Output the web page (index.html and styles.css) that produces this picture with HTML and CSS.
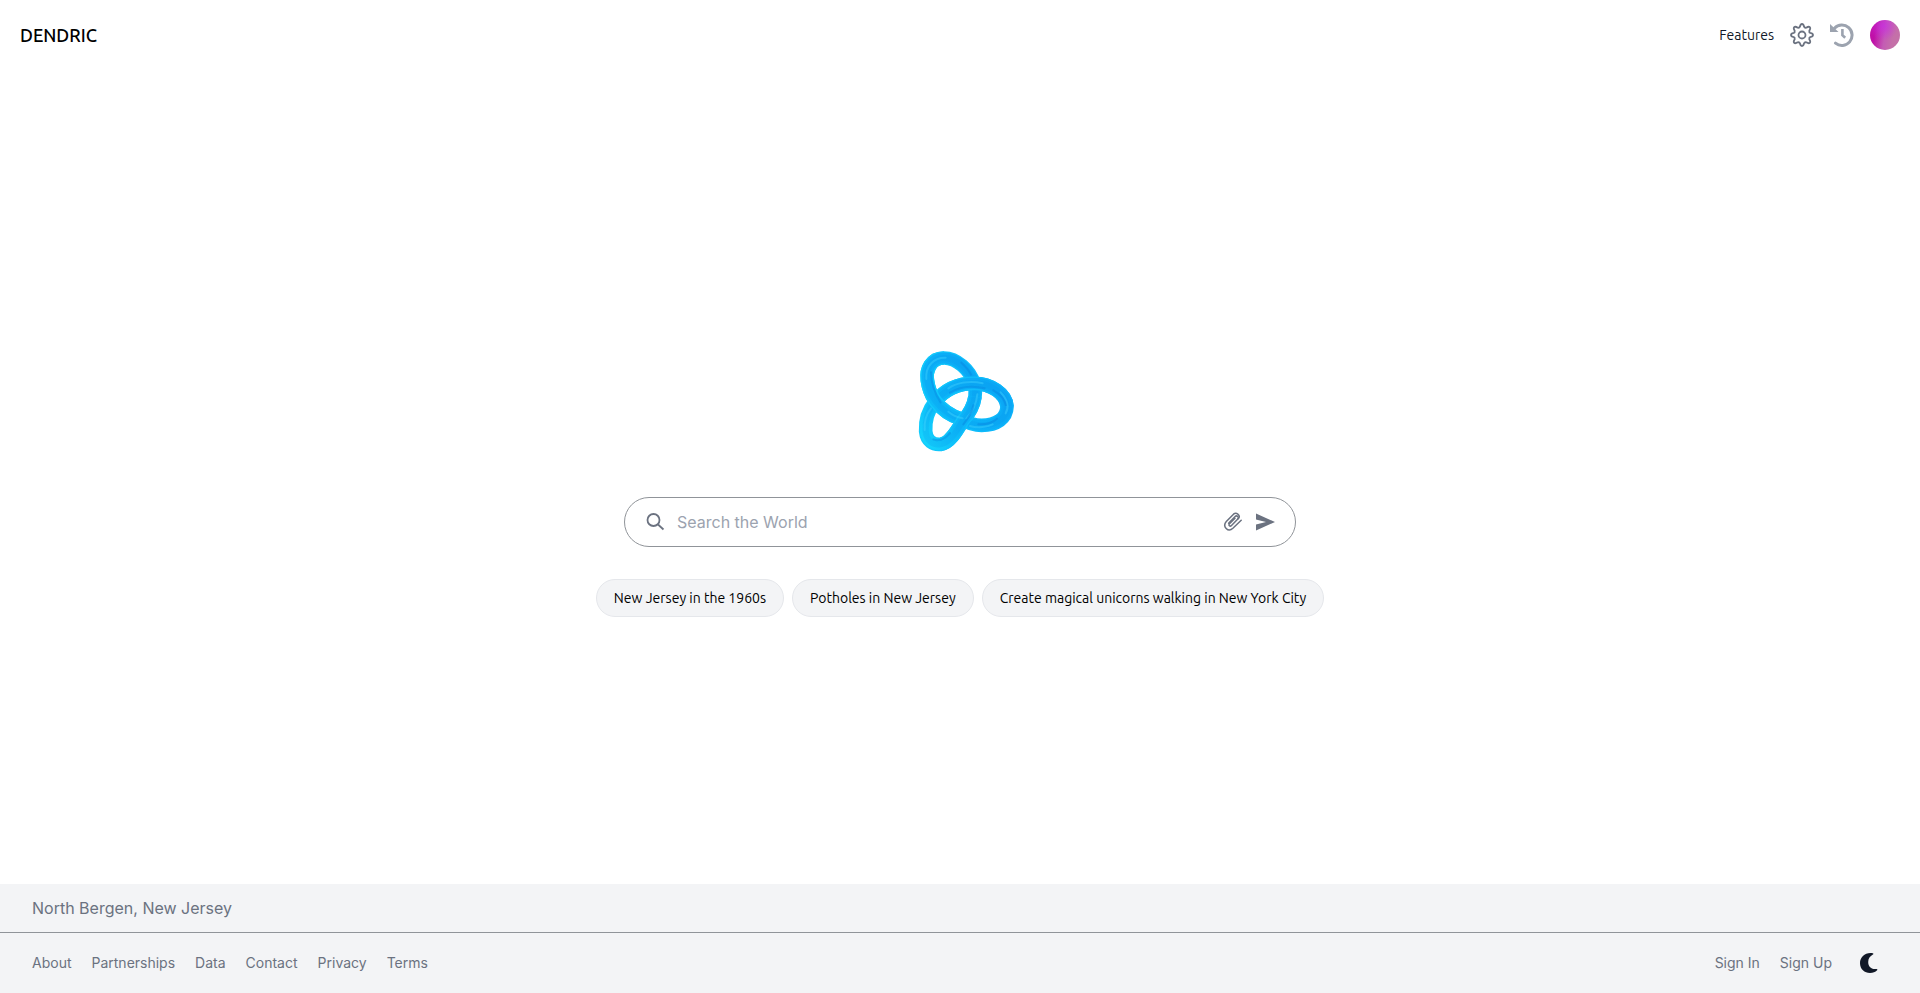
FILE: index.html
```
<!DOCTYPE html>
<html lang="en">
<head>
    <meta charset="UTF-8">
    <meta name="viewport" content="width=device-width, initial-scale=1.0">
    <title>Dendric</title>
    <link rel="stylesheet" href="styles.css">
</head>
<body>
    <header class="topbar">
        <a class="brand" href="#">DENDRIC</a>
        <nav class="topnav">
            <a class="features" href="#">Features</a>
            <button class="icon-button" type="button" aria-label="Settings">
                <svg width="24" height="24" viewBox="0 0 24 24" fill="none" stroke="#6b7280" stroke-width="1.8" stroke-linejoin="round">
                    <path d="M9.900 3.800Q10.400 1 12 1T14.100 3.800Q14.500 5 16.300 4.700Q18.700 3.100 19.800 4.200T19.300 7.700Q19 9.500 20.200 9.900Q23 10.400 23 12T20.200 14.100Q19 14.500 19.300 16.300Q20.900 18.700 19.800 19.800T16.300 19.300Q14.500 19 14.100 20.200Q13.600 23 12 23T9.900 20.200Q9.500 19 7.700 19.300Q5.300 20.900 4.200 19.800T4.700 16.300Q5 14.500 3.800 14.100Q1 13.600 1 12T3.800 9.900Q5 9.500 4.700 7.700Q3.100 5.300 4.200 4.200T7.700 4.700Q9.500 5 9.900 3.800z"/>
                    <circle cx="12" cy="12" r="3.500"/>
                </svg>
            </button>
            <button class="icon-button" type="button" aria-label="History">
                <svg width="24" height="24" viewBox="0 0 24 24" fill="none" stroke="#9ca3af" stroke-width="3">
                    <path d="M4.500 5.200A10.200 10.200 0 1 1 5.500 20.200" stroke-linecap="round"/>
                    <path d="M0 1v8h8.500z" fill="#9ca3af" stroke="none"/>
                    <path d="M12.400 6v6.200l2.800 2.600" stroke-width="2.600"/>
                </svg>
            </button>
            <button class="avatar" type="button" aria-label="Account"></button>
        </nav>
    </header>

    <main class="content">
        <svg class="logo" width="130" height="130" viewBox="0 0 390 390" fill="none">
            <defs>
                <linearGradient id="tube" gradientUnits="userSpaceOnUse" x1="60" y1="330" x2="300" y2="150">
                    <stop offset="0" stop-color="#16d8fd"/>
                    <stop offset=".4" stop-color="#0cb6f8"/>
                    <stop offset="1" stop-color="#0ba6f5"/>
                </linearGradient>
                <linearGradient id="rim" gradientUnits="userSpaceOnUse" x1="60" y1="200" x2="340" y2="200">
                    <stop offset="0" stop-color="#12ccfc"/>
                    <stop offset="1" stop-color="#0cb2fa"/>
                </linearGradient>
                <path id="loop" d="M225 185C227 171 226 158 222 145C210 105 170 69 132 69C92 69 78 105 82 135C85 160 92 178 105 197C125 224 150 242 185 253C205 265 222 271 245 271C290 271 320 250 321 215C319 176 272 145 222 145C175 145 133 165 105 200C85 225 75 255 77 289C80 319 100 330 122 328C150 325 172 285 190 255C208 237 222 208 225 185Z"/>
                <path id="right" d="M321 215C319 176 272 145 222 145C175 145 133 165 105 200"/>
                <path id="left" d="M132 69C92 69 78 105 82 135C85 160 92 178 105 197C125 224 150 242 185 253"/>
                <path id="bottom" d="M122 328C150 325 172 285 190 255C208 237 222 208 225 185"/>
            </defs>
            <g>
                <use class="rim" href="#loop"/>
                <use class="tube" href="#loop"/>
                <use class="core" href="#loop"/>
            </g>
            <g>
                <use class="rim" href="#right"/>
                <use class="tube" href="#right"/>
                <use class="core" href="#right"/>
            </g>
            <g>
                <use class="rim" href="#left"/>
                <use class="tube" href="#left"/>
                <use class="core" href="#left"/>
            </g>
            <g>
                <use class="rim" href="#bottom"/>
                <use class="tube" href="#bottom"/>
                <use class="core" href="#bottom"/>
            </g>
            <!-- reflections along the tube -->
            <g class="shine">
                <path d="M79 132C76 92 102 67 137 68"/>
                <path d="M145 230C160 243 174 247 188 250"/>
                <path d="M145 160C170 143 210 136 248 145"/>
                <path d="M302 172C322 193 328 215 317 235"/>
                <path d="M210 273C234 280 262 276 278 268"/>
                <path d="M74 285C72 257 80 236 93 220"/>
                <path d="M199 250C220 228 230 200 232 178"/>
            </g>
            <g class="shade">
                <path d="M93 112C93 146 104 176 122 202"/>
                <path d="M184 83C196 94 206 104 213 119"/>
                <path d="M150 173C182 153 220 152 254 160"/>
                <path d="M280 166C302 178 314 192 318 211"/>
                <path d="M235 268C258 269 278 263 291 251"/>
                <path d="M190 268C205 250 216 232 220 211"/>
                <path d="M100 313C120 321 137 310 150 294"/>
            </g>
        </svg>

        <form class="search">
            <svg width="20" height="20" viewBox="0 0 20 20" fill="none" stroke="#6b7280" stroke-width="1.800">
                <circle cx="8.500" cy="8" r="6"/>
                <path d="M13 12.500 18.500 17.500"/>
            </svg>
            <input type="text" placeholder="Search the World" aria-label="Search the World">
            <button class="icon-button" type="button" aria-label="Attach">
                <svg width="20" height="20" viewBox="0 0 20 20" fill="none" stroke="#6b7280" stroke-width="1.500" stroke-linecap="round">
                    <path d="M5.600 11.200 11.900 4.700C13.900 2.700 16.500 5.200 14.600 7.200L8.500 13.500C7 15 5.100 13.200 6.500 11.800L12 6.200" />
                    <path d="M14.600 7.200 16 5.700C17.200 3.200 13.500-.3 10.500 2.200L3.300 9.600C-.9 14.400 5 20.700 9.900 16.300L18.200 8.200"/>
                </svg>
            </button>
            <button class="icon-button" type="submit" aria-label="Send">
                <svg width="20" height="20" viewBox="0 0 20 20" fill="#6b7280">
                    <path d="M1 1.500v6L11 10 1 12.500v6L20 10z"/>
                </svg>
            </button>
        </form>

        <div class="suggestions">
            <button type="button">New Jersey in the 1960s</button>
            <button type="button">Potholes in New Jersey</button>
            <button type="button">Create magical unicorns walking in New York City</button>
        </div>
    </main>

    <footer class="footer">
        <div class="location">North Bergen, New Jersey</div>
        <div class="footer-bar">
            <nav class="footer-links">
                <a href="#">About</a>
                <a href="#">Partnerships</a>
                <a href="#">Data</a>
                <a href="#">Contact</a>
                <a href="#">Privacy</a>
                <a href="#">Terms</a>
            </nav>
            <nav class="footer-links">
                <a href="#">Sign In</a>
                <a href="#">Sign Up</a>
                <button class="icon-button theme" type="button" aria-label="Dark mode">
                    <svg width="20" height="20" viewBox="0 0 20 20" fill="#111827">
                        <path d="M12.800.3C5.500-1 0 4 0 10.200 0 16 4.500 20 10 20c3 0 5.300-.9 7.100-2.700.6-.7.200-1.400-.6-1.300C11 16.800 8.200 13.200 8.200 9c0-3.500 1.800-5.700 4.700-7.400.7-.4.700-1.100-.1-1.300z"/>
                    </svg>
                </button>
            </nav>
        </div>
    </footer>
</body>
</html>
```
FILE: styles.css
```
* {
    box-sizing: border-box;
}

body {
    margin: 0;
    min-height: 100vh;
    display: flex;
    flex-direction: column;
    background-color: #fff;
    font-family: Inter, sans-serif;
    color: #6b7280;
}

a {
    color: inherit;
    text-decoration: none;
}

button {
    font-family: inherit;
    border: none;
    padding: 0;
    background: none;
    cursor: pointer;
}

.icon-button {
    display: flex;
}

.topbar {
    display: flex;
    justify-content: space-between;
    align-items: center;
    height: 70px;
    padding: 0 20px;
}

.brand,
.features,
.suggestions button {
    font-family: Ubuntu, "Noto Sans", sans-serif;
}

.brand {
    font-size: 18px;
    font-weight: 500;
    color: #000;
}

.topnav {
    display: flex;
    align-items: center;
    gap: 16px;
}

.features {
    font-size: 14px;
    color: #111827;
}

.avatar {
    width: 30px;
    height: 30px;
    border-radius: 50%;
    background: radial-gradient(circle at 45% 20%, rgba(200, 50, 225, 0.8), transparent 50%),
        linear-gradient(100deg, #c010a8 20%, #c45cb4 50%, #c470a8 75%);
}

.content {
    flex: 1;
    display: flex;
    flex-direction: column;
    align-items: center;
    justify-content: center;
    padding-bottom: 2px;
}

.logo {
    margin-left: 10px;
}

.rim {
    stroke: url(#rim);
    stroke-width: 41;
}

.tube {
    stroke: url(#tube);
    stroke-width: 33;
}

.core {
    stroke: #0993ec;
    stroke-width: 18;
    opacity: 0.2;
}

.shine path {
    stroke: #45d6ff;
    stroke-width: 6;
    stroke-linecap: round;
    opacity: 0.4;
}

.shade path {
    stroke: #0787e2;
    stroke-width: 6;
    stroke-linecap: round;
    opacity: 0.5;
}

.search {
    display: flex;
    align-items: center;
    gap: 12px;
    width: 672px;
    max-width: 100%;
    height: 50px;
    margin: 32px 0;
    padding: 0 20px;
    border: 1px solid #909499;
    border-radius: 25px;
}

.search input {
    flex: 1;
    border: none;
    outline: none;
    padding: 0;
    font-family: inherit;
    font-size: 16px;
}

.search input::placeholder {
    color: #9ca3af;
}

.suggestions {
    display: flex;
    gap: 8px;
}

.suggestions button {
    height: 38px;
    padding: 0 17px;
    border: 1px solid #e5e7eb;
    border-radius: 19px;
    background-color: #f3f4f6;
    font-size: 14px;
    color: #000;
}

.footer {
    background-color: #f3f4f6;
}

.location {
    padding: 12px 32px;
    border-bottom: 1px solid #909499;
    font-size: 16px;
    line-height: 24px;
}

.footer-bar {
    display: flex;
    justify-content: space-between;
    align-items: center;
    height: 60px;
    padding: 0 32px;
    font-size: 14px;
    line-height: 20px;
}

.footer-links {
    display: flex;
    align-items: center;
    gap: 20px;
}

.theme {
    padding: 8px;
}
```
